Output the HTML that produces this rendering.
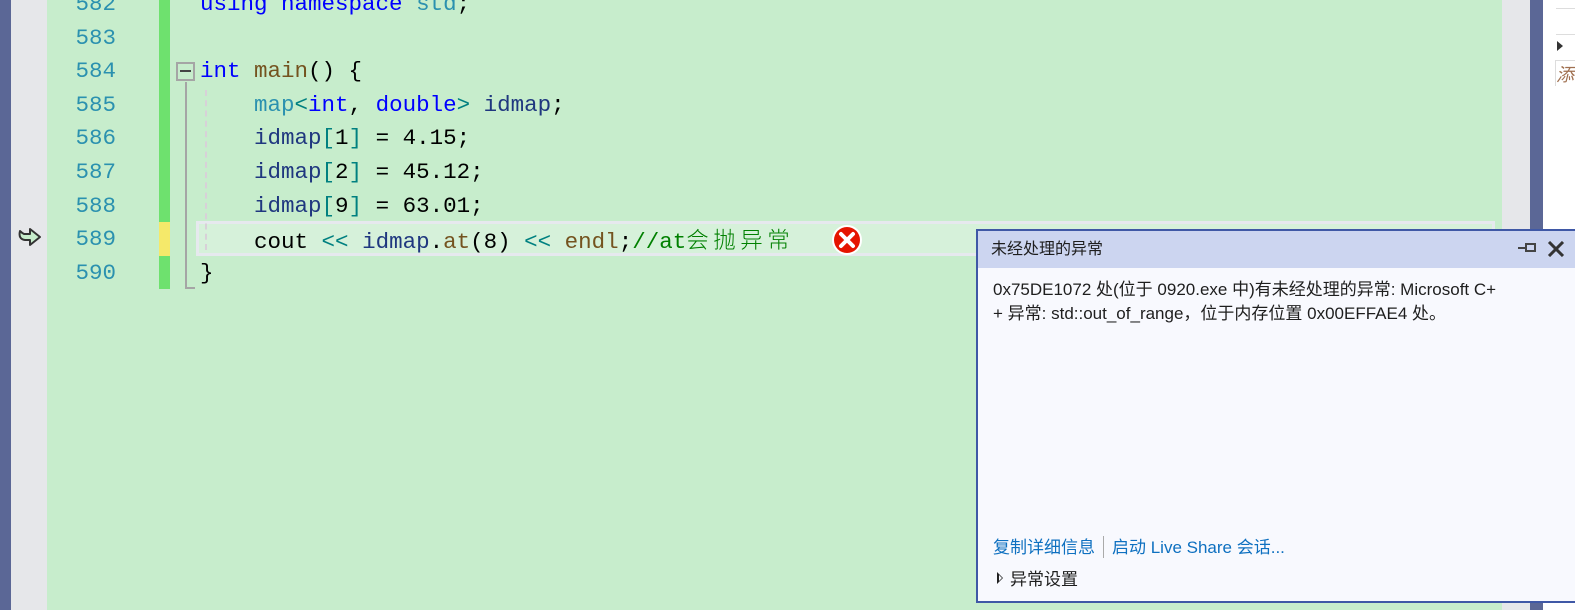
<!DOCTYPE html>
<html><head><meta charset="utf-8"><style>
*{margin:0;padding:0;box-sizing:border-box}
body{width:1575px;height:610px;overflow:hidden;position:relative;background:#c7edcc;font-family:"Liberation Mono","Noto Sans CJK SC",monospace}
.a{position:absolute}
.ln{position:absolute;left:50px;width:66px;text-align:right;color:#2b91af;font-size:22.5px;height:34px;line-height:34px}
.cd{position:absolute;left:200px;font-size:22.5px;height:34px;line-height:34px;white-space:pre;color:#000}
.k{color:#0000ff}.f{color:#74531f}.t{color:#2b91af}.v{color:#1f377f}.o{color:#008080}.c{color:#008000}
.cj{letter-spacing:4.5px;font-family:"Noto Sans CJK SC",sans-serif;font-weight:300}
.ui{font-family:"Liberation Sans","Noto Sans CJK SC",sans-serif}
</style></head><body>
<div class="a" style="left:0;top:0;width:11px;height:610px;background:#5b6796"></div>
<div class="a" style="left:11px;top:0;width:36px;height:610px;background:#e6e7ea"></div>
<div class="a" style="left:1502px;top:0;width:28px;height:610px;background:#e6e7ea"></div>
<div class="a" style="left:1530px;top:0;width:13px;height:610px;background:#5b6796"></div>
<div class="a" style="left:1543px;top:0;width:32px;height:610px;background:#fff"></div>
<div class="a" style="left:1556px;top:8px;width:19px;height:1px;background:#ddd"></div>
<div class="a" style="left:1556px;top:34px;width:19px;height:1px;background:#ddd"></div>
<div class="a" style="left:1557px;top:41px;width:0;height:0;border-left:6px solid #333;border-top:5px solid transparent;border-bottom:5px solid transparent"></div>
<div class="a" style="left:1555px;top:60px;width:20px;height:26px;border-left:1px solid #ddd;border-top:1px solid #ddd;color:#a07050;font-size:18px;font-style:italic;font-family:'Noto Sans CJK SC',sans-serif;line-height:26px">添</div>

<div class="a" style="left:196px;top:221px;width:1299px;height:35px;border:3px solid #e6e9ee;background:#d6f1da"></div>

<div class="a" style="left:159px;top:0;width:11px;height:289px;background:#6ee16e"></div>
<div class="a" style="left:159px;top:222px;width:11px;height:34px;background:#f5e96a"></div>

<div class="a" style="left:176px;top:62px;width:19px;height:19px;border:2px solid #a5a5a5;background:#c7edcc"></div>
<div class="a" style="left:180px;top:70px;width:11px;height:2px;background:#444"></div>
<div class="a" style="left:185px;top:82px;width:2px;height:206px;background:#a5a5a5"></div>
<div class="a" style="left:185px;top:287px;width:10px;height:2px;background:#a5a5a5"></div>
<div class="a" style="left:205px;top:90px;width:0;height:160px;border-left:2px dashed #d8d0d8"></div>

<svg class="a" style="left:16px;top:225px" width="28" height="26" viewBox="0 0 28 26"><path d="M4 6 Q2 14 9 15 L14 15 L14 20 L24 12 L14 4 L14 9 L8 9 Q6 8 4 6 Z" fill="#c7edcc" stroke="#333" stroke-width="2" stroke-linejoin="round"/></svg>

<div class="ln" style="top:-13px">582</div>
<div class="ln" style="top:21px">583</div>
<div class="ln" style="top:54px">584</div>
<div class="ln" style="top:88px">585</div>
<div class="ln" style="top:121px">586</div>
<div class="ln" style="top:155px">587</div>
<div class="ln" style="top:189px">588</div>
<div class="ln" style="top:222px">589</div>
<div class="ln" style="top:256px">590</div>

<div class="cd" style="top:-13px"><span class="k">using namespace</span> <span class="t">std</span>;</div>
<div class="cd" style="top:54px"><span class="k">int</span> <span class="f">main</span>() {</div>
<div class="cd" style="top:88px">    <span class="t">map</span><span class="o">&lt;</span><span class="k">int</span>, <span class="k">double</span><span class="o">&gt;</span> <span class="v">idmap</span>;</div>
<div class="cd" style="top:121px">    <span class="v">idmap</span><span class="o">[</span>1<span class="o">]</span> = 4.15;</div>
<div class="cd" style="top:155px">    <span class="v">idmap</span><span class="o">[</span>2<span class="o">]</span> = 45.12;</div>
<div class="cd" style="top:189px">    <span class="v">idmap</span><span class="o">[</span>9<span class="o">]</span> = 63.01;</div>
<div class="cd" style="top:222px">    <span>cout</span> <span class="o">&lt;&lt;</span> <span class="v">idmap</span>.<span class="f">at</span>(8) <span class="o">&lt;&lt;</span> <span class="f">endl</span>;<span class="c">//at<span class="cj">会抛异常</span></span></div>
<div class="cd" style="top:256px">}</div>

<svg class="a" style="left:831px;top:224px" width="32" height="32" viewBox="0 0 32 32"><circle cx="16" cy="16" r="15" fill="#fff"/><circle cx="16" cy="16" r="13" fill="#e51400"/><path d="M10 10 L22 22 M22 10 L10 22" stroke="#fff" stroke-width="4" stroke-linecap="round"/></svg>

<div class="a ui" style="left:976px;top:229px;width:610px;height:374px;border:2px solid #3f58a6;border-right:none;background:#f8f9fe">
 <div style="height:37px;background:#ccd5f0;font-size:16px;line-height:38px;padding-left:13px;color:#1e1e1e">未经处理的异常</div>
 <div class="a" style="left:540px;top:16px;width:8px;height:2px;background:#444"></div>
 <div class="a" style="left:547px;top:12px;width:11px;height:9px;border:2px solid #444"></div>
 <svg class="a" style="left:569px;top:10px" width="18" height="16"><path d="M2 1 L16 15 M16 1 L2 15" stroke="#333" stroke-width="3"/></svg>
 <div style="padding:10px 0 0 15px;font-size:17px;line-height:24px;color:#1e1e1e;width:585px">0x75DE1072 处(位于 0920.exe 中)有未经处理的异常: Microsoft C+<br>+ 异常: std::out_of_range，位于内存位置 0x00EFFAE4 处。</div>
 <div class="a" style="left:15px;top:302px;font-size:17px;color:#0e70c0;white-space:nowrap">复制详细信息<span style="display:inline-block;width:1px;height:22px;background:#aaa;margin:0 8px;vertical-align:-5px"></span>启动 Live Share 会话...</div>
 <div class="a" style="left:19px;top:341px;width:0;height:0;border-left:6px solid #222;border-top:6px solid transparent;border-bottom:6px solid transparent"></div>
 <div class="a" style="left:21px;top:344px;width:0;height:0;border-left:3px solid #f8f9fe;border-top:3px solid transparent;border-bottom:3px solid transparent"></div>
 <div class="a" style="left:32px;top:334px;font-size:17px;color:#1e1e1e">异常设置</div>
</div>
</body></html>
